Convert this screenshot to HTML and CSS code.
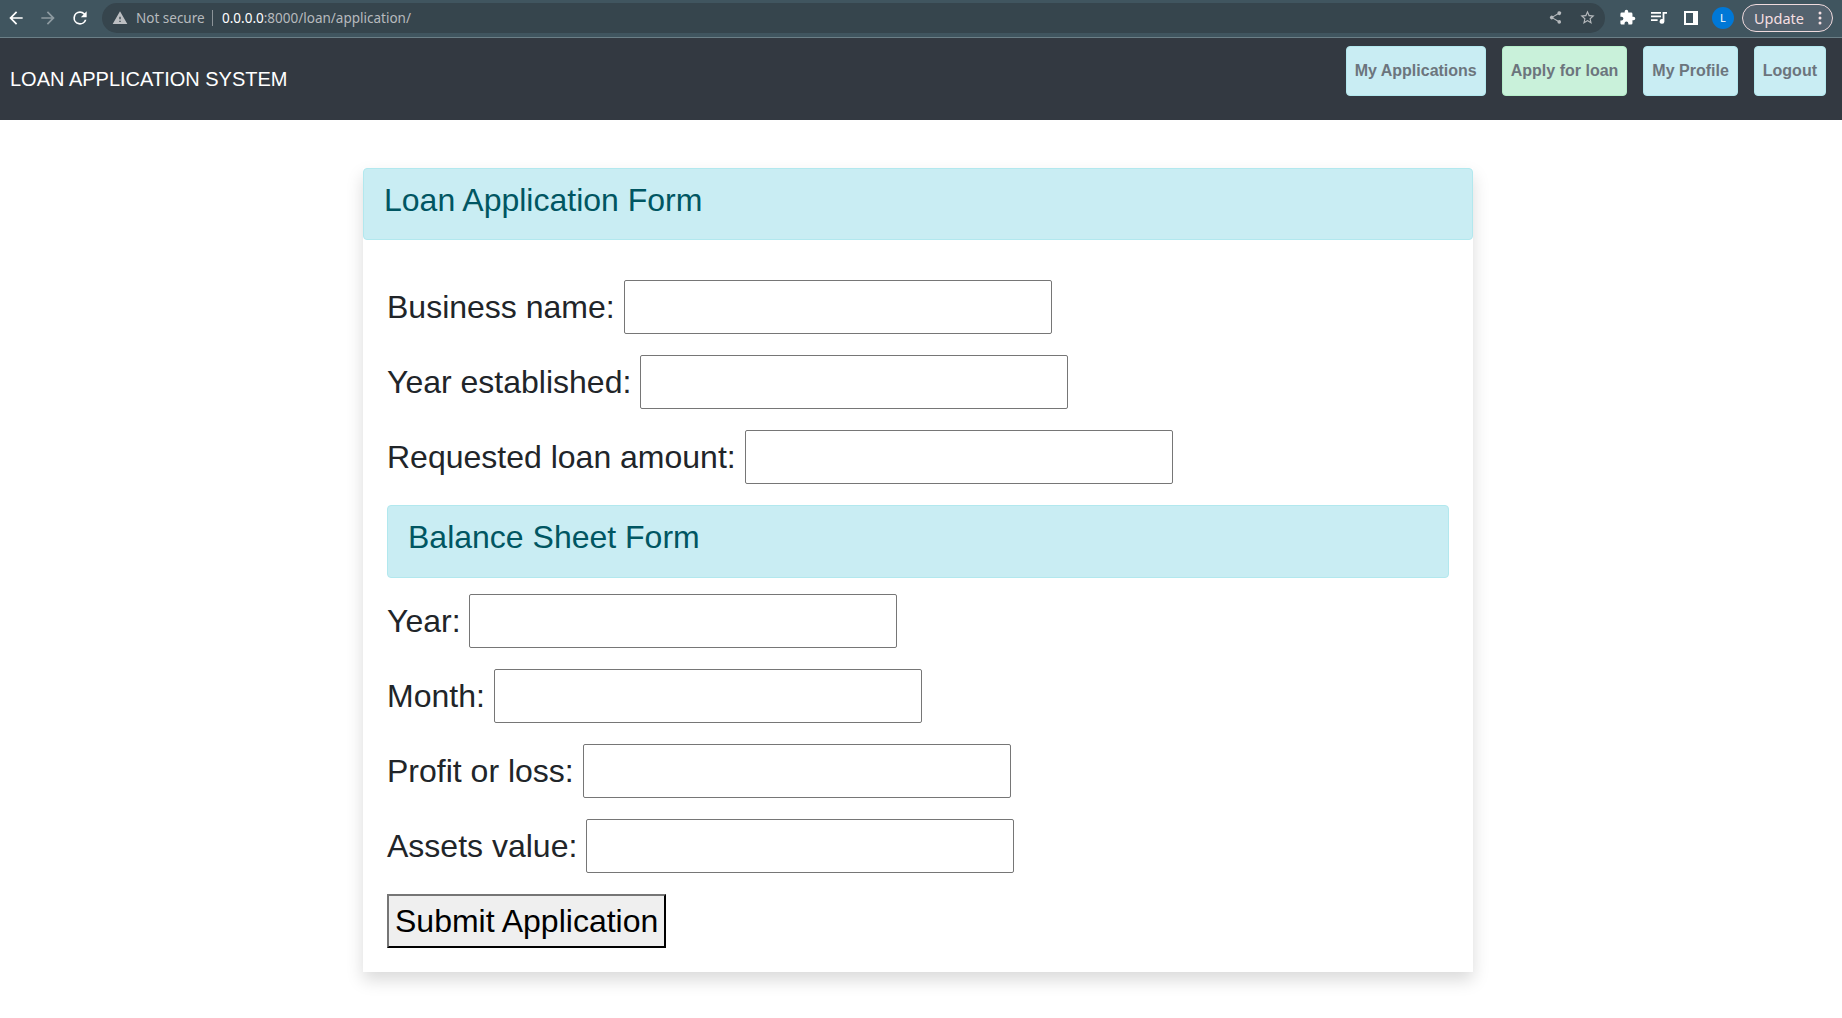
FILE: index.html
```html
<!DOCTYPE html>
<html lang="en">
<head>
<meta charset="utf-8">
<title>Loan Application System</title>
<link rel="stylesheet" href="styles.css">
</head>
<body>
<div class="toolbar">
  <svg class="icon back" viewBox="0 0 24 24"><path d="M20 11H7.83l5.59-5.59L12 4l-8 8 8 8 1.41-1.41L7.83 13H20v-2z"/></svg>
  <svg class="icon forward" viewBox="0 0 24 24"><path d="M12 4l-1.41 1.41L16.17 11H4v2h12.17l-5.58 5.59L12 20l8-8z"/></svg>
  <svg class="icon reload" viewBox="0 0 24 24"><path d="M17.65 6.35A7.96 7.96 0 0 0 12 4a8 8 0 1 0 7.73 10h-2.08A6 6 0 1 1 12 6c1.66 0 3.14.69 4.22 1.78L13 11h7V4l-2.35 2.35z"/></svg>
  <div class="omnibox">
    <svg class="warn" viewBox="0 0 24 24"><path d="M1 21h22L12 2 1 21zm12-3h-2v-2h2v2zm0-4h-2v-4h2v4z"/></svg>
    <span class="secure">Not secure</span>
    <span class="divider"></span>
    <span class="url"><span class="host">0.0.0.0</span>:8000/loan/application/</span>
    <svg class="share" viewBox="0 0 24 24"><path d="M18 16.08c-.76 0-1.44.3-1.96.77L8.91 12.7c.05-.23.09-.46.09-.7s-.04-.47-.09-.7l7.05-4.11A3 3 0 1 0 15 5c0 .24.04.47.09.7L8.04 9.81a3 3 0 1 0 0 4.38l7.12 4.16c-.05.21-.08.43-.08.65a2.92 2.92 0 1 0 2.92-2.92z"/></svg>
    <svg class="star" viewBox="0 0 24 24"><path d="M22 9.24l-7.19-.62L12 2 9.19 8.63 2 9.24l5.46 4.73L5.82 21 12 17.27 18.18 21l-1.63-7.03L22 9.24zM12 15.4l-3.76 2.27 1-4.28-3.32-2.88 4.38-.38L12 6.1l1.71 4.04 4.38.38-3.32 2.88 1 4.28L12 15.4z"/></svg>
  </div>
  <svg class="puzzle" viewBox="0 0 24 24"><path d="M20.5 11H19V7a2 2 0 0 0-2-2h-4V3.5a2.5 2.5 0 0 0-5 0V5H4a2 2 0 0 0-2 2v3.8h1.5a2.7 2.7 0 0 1 0 5.4H2V20c0 1.1.9 2 2 2h3.8v-1.5a2.7 2.7 0 0 1 5.4 0V22H17a2 2 0 0 0 2-2v-4h1.5a2.5 2.5 0 0 0 0-5z"/></svg>
  <svg class="queue" viewBox="0 0 16 14"><path d="M0 1h10v1.7H0zM0 4.6h10v1.7H0zM0 8.2h6.6v1.7H0zM11.6 1H16v1.8h-2.6v7.6a2.4 2.4 0 1 1-1.8-2.3z"/></svg>
  <svg class="panel" viewBox="0 0 14 14"><path fill-rule="evenodd" d="M0 0h14v14H0zM2 2v10h7V2z"/></svg>
  <span class="avatar">L</span>
  <span class="update">Update<svg class="dots" viewBox="0 0 4 14"><circle cx="2" cy="2" r="1.5"/><circle cx="2" cy="7" r="1.5"/><circle cx="2" cy="12" r="1.5"/></svg></span>
</div>
<nav class="navbar">
  <span class="brand">LOAN APPLICATION SYSTEM</span>
  <div class="links">
    <a class="link">My Applications</a>
    <a class="link active">Apply for loan</a>
    <a class="link">My Profile</a>
    <a class="link">Logout</a>
  </div>
</nav>
<main class="card">
  <h2 class="heading">Loan Application Form</h2>
  <form class="form">
    <p class="row"><label for="name">Business name:</label> <input class="field" id="name"></p>
    <p class="row"><label for="est">Year established:</label> <input class="field" id="est"></p>
    <p class="row"><label for="amount">Requested loan amount:</label> <input class="field" id="amount"></p>
    <h2 class="heading sub">Balance Sheet Form</h2>
    <p class="row"><label for="year">Year:</label> <input class="field" id="year"></p>
    <p class="row"><label for="month">Month:</label> <input class="field" id="month"></p>
    <p class="row"><label for="profit">Profit or loss:</label> <input class="field" id="profit"></p>
    <p class="row"><label for="assets">Assets value:</label> <input class="field" id="assets"></p>
    <button class="submit" type="button">Submit Application</button>
  </form>
</main>
</body>
</html>
```
FILE: styles.css
```css
* { box-sizing: border-box; }
body { min-height: 1018px; margin: 0; padding-bottom: 46px; background: #fff; color: #212529; font-family: "Liberation Sans", Arial, sans-serif; font-size: 16px; line-height: 1.5; }
svg { flex: none; fill: currentColor; }

.toolbar { display: flex; align-items: center; height: 38px; padding: 0 9px 2px 6px; background: #40555f; border-bottom: 1px solid #6b7f87; color: #fff; font-family: "Noto Sans", sans-serif; font-size: 13.5px; line-height: 18px; }
.icon { width: 20px; height: 20px; margin-right: 12px; }
.forward { color: #8e9ba1; }
.omnibox { display: flex; flex: 1; align-items: center; height: 30px; padding: 0 9px 0 10px; border-radius: 15px; background: #36454d; color: #b6babd; }
.warn { width: 16px; height: 16px; color: #bcbfc2; }
.secure { width: 68px; margin-left: 8px; white-space: nowrap; }
.divider { width: 1px; height: 16px; margin: 0 9px 0 8px; background: #8b9398; }
.url { margin-right: auto; }
.host { color: #fff; }
.share { width: 15px; height: 15px; margin-right: 16px; }
.star { width: 17px; height: 17px; }
.puzzle { width: 17px; height: 17px; margin-left: 14px; }
.queue { width: 16px; height: 14px; margin-left: 15px; }
.panel { width: 14px; height: 14px; margin-left: 17px; }
.avatar { width: 22px; height: 22px; margin-left: 14px; border-radius: 50%; background: #0078d7; font-size: 11px; line-height: 22px; text-align: center; }
.update { display: flex; align-items: center; justify-content: space-between; width: 91px; height: 28px; margin-left: 8px; padding: 0 10px 0 11px; border: 1px solid #efdadd; border-radius: 14px; background: #53626e; color: #f5dfe2; font-size: 14.5px; }
.dots { width: 4px; height: 14px; }

.navbar { display: flex; justify-content: space-between; align-items: flex-start; height: 82px; padding: 8px 16px 0 10px; background: #333941; }
.brand { margin-top: 18px; color: #fff; font-size: 20px; line-height: 30px; }
.links { display: flex; gap: 16px; }
.link { height: 50px; padding: 12px 8px; border: 1px solid #b3e8ee; border-radius: 4px; background: #c9edf3; color: #6c757d; font-weight: bold; line-height: 24px; }
.active { border-color: #b5edc9; background: #c9f1da; }

.card { width: 1110px; height: 804px; margin: 48px 0 0 363px; box-shadow: 0 8px 16px rgba(0, 0, 0, .15); }
.heading { height: 72px; margin: 0; padding: 12px 20px; border: 1px solid #b2e8ee; border-radius: 4px; background: #c9edf3; color: #005662; font-size: 32px; font-weight: normal; line-height: 38.4px; }
.sub { height: 73px; margin-bottom: 16px; }
.form { padding: 40px 24px 24px; font-size: 32px; }
.row { height: 54px; margin: 0 0 21px; line-height: 54px; white-space: nowrap; }
.field { width: 428px; height: 54px; padding: 1px 2px; border: 1px solid #767676; border-radius: 2px; background: #fff; font: inherit; line-height: 50px; vertical-align: top; }
.submit { display: block; height: 54px; padding: 1px 6px; border: 2px outset #767676; border-color: #767676 #212121 #212121 #767676; border-radius: 0; background: #efefef; color: #000; font: inherit; line-height: 48px; }
```
